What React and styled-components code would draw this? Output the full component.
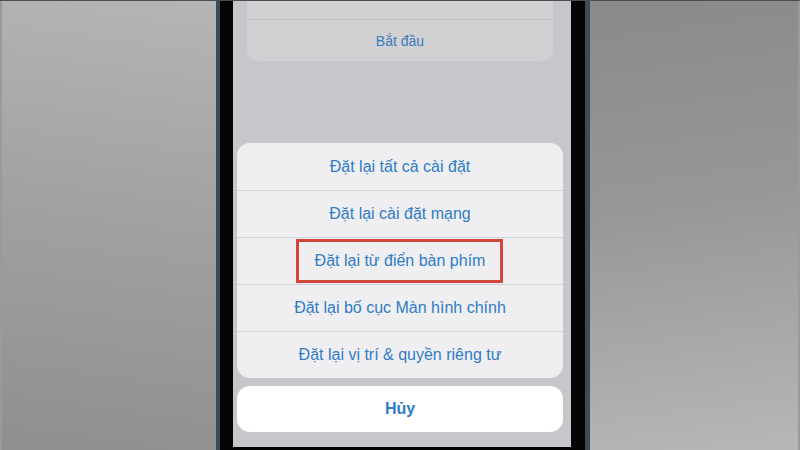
import React from "react";
import styled, { createGlobalStyle } from "styled-components";

const GlobalStyle = createGlobalStyle`
  html, body {
    margin: 0;
    padding: 0;
    width: 800px;
    height: 450px;
    overflow: hidden;
    background: #9e9e9e;
  }
  * { box-sizing: border-box; }
`;

const Stage = styled.div`
  display: flex;
  width: 800px;
  height: 450px;
  border-top: 1px solid #4d4d4d;
  font-family: "Liberation Sans", "Noto Sans", sans-serif;
`;

const Backdrop = styled.div`
  flex: ${p => p.$flip ? "1 1 0" : "0 0 216px"};
  background: ${p => p.$flip
    ? "linear-gradient(172deg, #8a8a8a 0%, #979797 45%, #b7b7b7 100%)"
    : "linear-gradient(188deg, #b5b5b5 0%, #a2a2a2 45%, #8f8f8f 100%)"};
  border-left: ${p => p.$flip ? "none" : "2px solid #9a9a9a"};
  border-right: ${p => p.$flip ? "2px solid #9a9a9a" : "none"};
`;

const Phone = styled.div`
  display: flex;
  flex: 0 0 374px;
  background: #3a4c5a;
  padding: 0 5px 0 4px;
`;

const Bezel = styled.div`
  display: flex;
  flex: 1;
  background: #050505;
  padding: 0 14px 3px 13px;
`;

const Screen = styled.div`
  flex: 1;
  display: flex;
  flex-direction: column;
  background: #c7c7cb;
  overflow: hidden;
  padding-bottom: 15px;
`;

const TopCard = styled.div`
  margin: -30px 18px 0 14px;
  background: #d1d1d3;
  border-radius: 0 0 11px 11px;
  display: flex;
  flex-direction: column;
`;

const TopRow = styled.div`
  height: ${p => p.$h}px;
  display: flex;
  align-items: center;
  justify-content: center;
  color: #3c7bbd;
  font-size: 14px;
  & + & { border-top: 1px solid #c2c2c6; }
`;

const Spacer = styled.div`
  flex: 1;
`;

const Sheet = styled.div`
  margin: 0 8px 0 4px;
  background: #efeff1;
  border-radius: 13px;
  display: flex;
  flex-direction: column;
  overflow: hidden;
`;

const Action = styled.div`
  position: relative;
  height: 47px;
  display: flex;
  align-items: center;
  justify-content: center;
  color: #2f7cc6;
  font-size: 16px;
  & + & { border-top: 1px solid #d3d3d7; }
`;

const Highlight = styled.div`
  position: absolute;
  top: 1px;
  bottom: 1px;
  left: 59px;
  right: 60px;
  border: 3px solid #d2463c;
`;

const Cancel = styled.div`
  margin: 8px 8px 0 4px;
  height: 46px;
  background: #ffffff;
  border-radius: 13px;
  display: flex;
  align-items: center;
  justify-content: center;
  color: #2f7cc6;
  font-size: 16px;
  font-weight: 700;
`;

const actions = [
  "Đặt lại tất cả cài đặt",
  "Đặt lại cài đặt mạng",
  "Đặt lại từ điển bàn phím",
  "Đặt lại bố cục Màn hình chính",
  "Đặt lại vị trí & quyền riêng tư",
];

export default function App() {
  return (
    <>
      <GlobalStyle />
      <Stage>
        <Backdrop />
        <Phone>
          <Bezel>
            <Screen>
              <TopCard>
                <TopRow $h={48} />
                <TopRow $h={42}>Bắt đầu</TopRow>
              </TopCard>
              <Spacer />
              <Sheet>
                {actions.map((label, i) => (
                  <Action key={label}>
                    {label}
                    {i === 2 && <Highlight />}
                  </Action>
                ))}
              </Sheet>
              <Cancel>Hủy</Cancel>
            </Screen>
          </Bezel>
        </Phone>
        <Backdrop $flip />
      </Stage>
    </>
  );
}
